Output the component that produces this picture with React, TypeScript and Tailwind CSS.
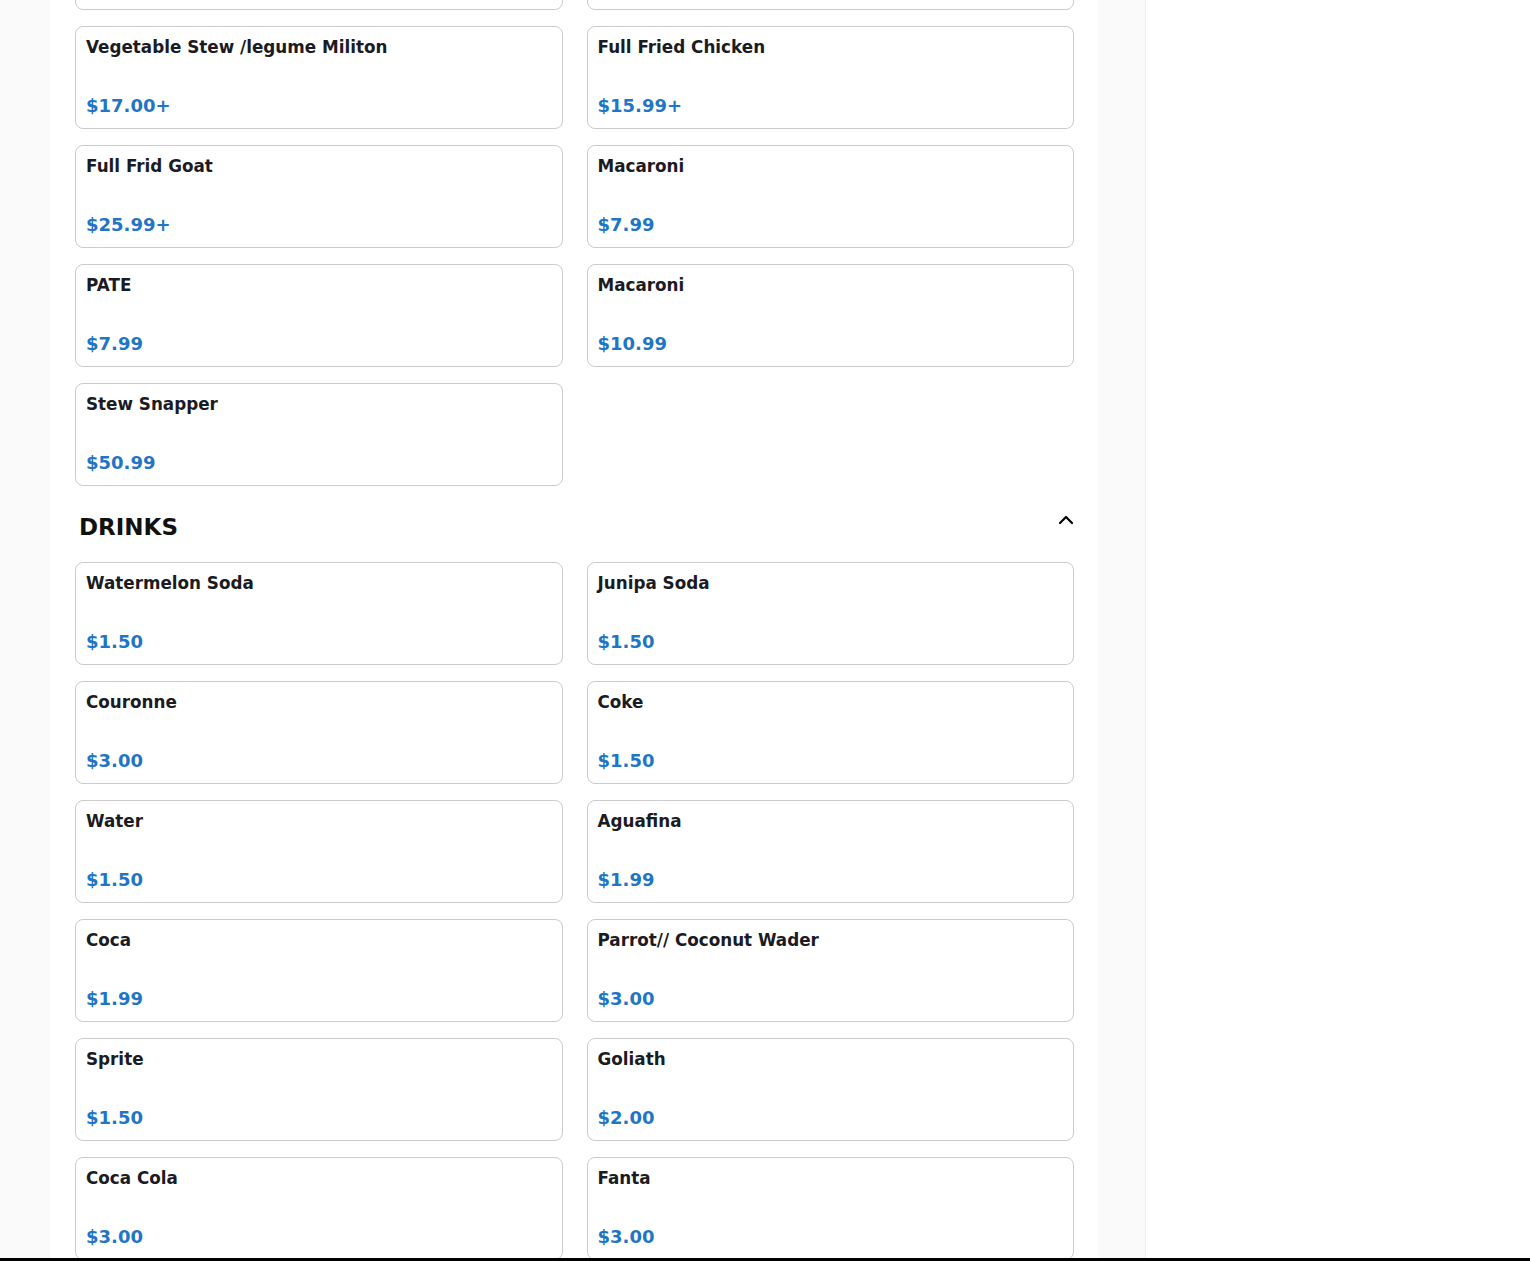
import { ChevronUp } from "lucide-react"

type Item = { name: string; price: string }

const foodItems: Item[] = [
  { name: "Rice and Beans", price: "$9.99" },
  { name: "Fried Plantain", price: "$5.99" },
  { name: "Vegetable Stew /legume Militon", price: "$17.00+" },
  { name: "Full Fried Chicken", price: "$15.99+" },
  { name: "Full Frid Goat", price: "$25.99+" },
  { name: "Macaroni", price: "$7.99" },
  { name: "PATE", price: "$7.99" },
  { name: "Macaroni", price: "$10.99" },
  { name: "Stew Snapper", price: "$50.99" },
]

const drinkItems: Item[] = [
  { name: "Watermelon Soda", price: "$1.50" },
  { name: "Junipa Soda", price: "$1.50" },
  { name: "Couronne", price: "$3.00" },
  { name: "Coke", price: "$1.50" },
  { name: "Water", price: "$1.50" },
  { name: "Aguafina", price: "$1.99" },
  { name: "Coca", price: "$1.99" },
  { name: "Parrot// Coconut Wader", price: "$3.00" },
  { name: "Sprite", price: "$1.50" },
  { name: "Goliath", price: "$2.00" },
  { name: "Coca Cola", price: "$3.00" },
  { name: "Fanta", price: "$3.00" },
]

function MenuCard({ item }: { item: Item }) {
  return (
    <div className="flex h-[103px] flex-col justify-between rounded-lg border border-[#cbcbcb] bg-white px-[10px] pt-[7px] pb-[9px]">
      <p className="text-[16.8px] font-bold leading-[27px] text-[#1b1b23]">{item.name}</p>
      <p className="text-[18px] font-bold leading-[27px] text-[#1f75c6]">{item.price}</p>
    </div>
  )
}

export default function App() {
  return (
    <div
      className="flex h-[1261px] overflow-hidden border-b-[3px] border-black bg-white"
      style={{ fontFamily: '"DejaVu Sans", sans-serif' }}
    >
      <div className="w-[50px] shrink-0 bg-[#fafafa]" />

      <main className="flex w-[1048px] shrink-0 flex-col bg-white pl-[25px] pr-[24px]">
        {/* Food section (scrolled, top row partly hidden) */}
        <div className="-mt-[93.5px] grid grid-cols-2 gap-x-6 gap-y-4">
          {foodItems.map((item, i) => (
            <MenuCard key={i} item={item} />
          ))}
        </div>

        {/* Drinks */}
        <div className="mt-[28px] flex items-start justify-between pl-1">
          <h2 className="text-[23px] font-bold leading-[27px] text-[#111111]">DRINKS</h2>
          <ChevronUp size={24} strokeWidth={2.2} className="-mr-1 -mt-[6px] text-black" />
        </div>

        <div className="mt-[21.5px] grid grid-cols-2 gap-x-6 gap-y-4">
          {drinkItems.map((item, i) => (
            <MenuCard key={i} item={item} />
          ))}
        </div>
      </main>

      <div className="w-[48px] shrink-0 border-r border-[#ececec] bg-[#fafafa]" />
      <div className="flex-1 bg-white" />
    </div>
  )
}
